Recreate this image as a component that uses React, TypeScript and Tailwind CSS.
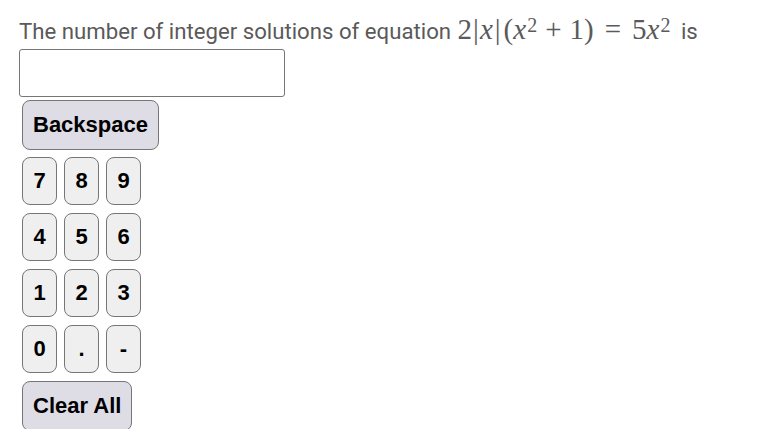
import React from "react";

const digitRows = [
  ["7", "8", "9"],
  ["4", "5", "6"],
  ["1", "2", "3"],
  ["0", ".", "-"],
];

function Key({ label, wide }: { label: string; wide?: boolean }) {
  return (
    <button
      className={
        "rounded-[8px] border border-[#767676] text-[22px] font-bold leading-none text-black " +
        (wide ? "h-[50px] bg-[#dedce5] px-[10px]" : "h-[48px] w-[35px] bg-[#efefef] px-0")
      }
      style={{ fontFamily: '"Liberation Sans", Arial, sans-serif' }}
    >
      {label}
    </button>
  );
}

export default function App() {
  return (
    <div className="min-h-[429px] bg-white pl-[19px]">
      <div
        className="h-[49px] whitespace-nowrap pt-[15px] text-[22.2px] leading-[24px] text-[#5a5a5a]"
        style={{ fontFamily: "Roboto, sans-serif" }}
      >
        <span>The number of integer solutions of equation </span>
        <span className="text-[29px] leading-none" style={{ fontFamily: '"Liberation Serif", serif' }}>
          <span className="ml-[1px]">2</span>
          <span className="ml-[1px]">|</span>
          <i className="ml-[1px]">x</i>
          <span className="ml-[2px]">|</span>
          <span className="ml-[3px]">(</span>
          <i>x</i>
          <sup className="relative -top-[7px] ml-[1px] text-[20px]">2</sup>
          <span className="mx-[8px]">+</span>
          <span>1</span>
          <span>)</span>
          <span className="mx-[11px]">=</span>
          <span>5</span>
          <i>x</i>
          <sup className="relative -top-[7px] ml-[1px] text-[20px]">2</sup>
        </span>
        <span className="ml-[5px]"> is</span>
      </div>
      <input
        type="text"
        className="block h-[48px] w-[266px] rounded-[3px] border border-[#767676] bg-white outline-none"
      />
      <div className="ml-[3px] mt-[3px] flex flex-col items-start">
        <Key label="Backspace" wide />
        <div className="mt-[7px] flex flex-col gap-[8px]">
          {digitRows.map((row, i) => (
            <div key={i} className="flex gap-[7px]">
              {row.map((d) => (
                <Key key={d} label={d} />
              ))}
            </div>
          ))}
        </div>
        <div className="mt-[8px]">
          <Key label="Clear All" wide />
        </div>
      </div>
    </div>
  );
}
